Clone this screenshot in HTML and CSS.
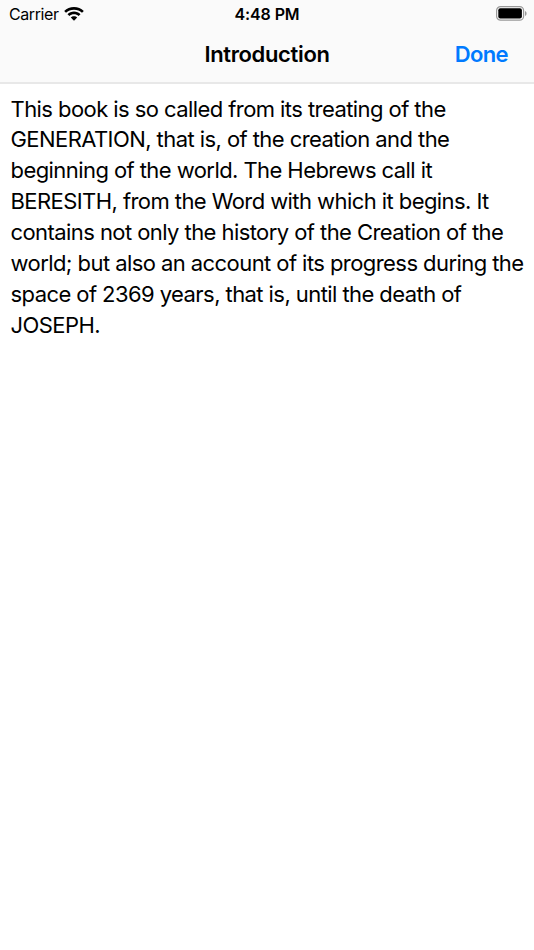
FILE: index.html
```html
<!DOCTYPE html>
<html lang="en">
<head>
    <meta charset="UTF-8">
    <meta name="viewport" content="width=device-width, initial-scale=1.0">
    <title>Introduction</title>
    <link rel="stylesheet" href="styles.css">
</head>
<body>
    <header class="header">
        <div class="status-bar">
            <div class="carrier">
                <span>Carrier</span>
                <svg class="wifi" viewBox="0 0 20 14" width="20" height="14">
                    <path d="M10 0C6.200 0 2.800 1.500 .2 3.900L2 5.800C4.100 3.800 6.900 2.800 10 2.800s5.900 1 8 3l1.800-1.900C17.200 1.500 13.800 0 10 0z"/>
                    <path d="M10 4.600c-2.500 0-4.800 1-6.500 2.600l1.900 1.900C6.600 7.900 8.200 7.300 10 7.300s3.400.6 4.600 1.800l1.900-1.900C14.800 5.600 12.500 4.600 10 4.600z"/>
                    <path d="M10 9.200c-1.300 0-2.400.5-3.200 1.300L10 13.700l3.200-3.200C12.400 9.700 11.300 9.200 10 9.200z"/>
                </svg>
            </div>
            <div class="time">4:48 PM</div>
            <svg class="battery" viewBox="0 0 31 15" width="31" height="15">
                <rect x=".6" y=".6" width="27" height="13.600" rx="4" fill="none" stroke="#999" stroke-width="1.200"/>
                <rect x="2.300" y="2.300" width="23.600" height="10.200" rx="2"/>
                <path d="M29 5c1 .4 1.600 1.300 1.600 2.500S30 9.600 29 10z" fill="#999"/>
            </svg>
        </div>
        <nav class="nav-bar">
            <h1>Introduction</h1>
            <button class="done" type="button">Done</button>
        </nav>
    </header>
    <main class="content">
        <p>
            This book is so called from its treating of the<br>
            GENERATION, that is, of the creation and the<br>
            beginning of the world. The Hebrews call it<br>
            BERESITH, from the Word with which it begins. It<br>
            contains not only the history of the Creation of the<br>
            world; but also an account of its progress during the<br>
            space of 2369 years, that is, until the death of<br>
            JOSEPH.
        </p>
    </main>
</body>
</html>
```
FILE: styles.css
```css
body {
    margin: 0;
    background-color: #fff;
    color: #000;
    font-family: Inter, sans-serif;
}

.header {
    box-sizing: border-box;
    height: 84px;
    background-color: #fafafa;
    border-bottom: 2px solid #e8e8e8;
}

.status-bar {
    display: grid;
    grid-template-columns: 1fr auto 1fr;
    align-items: center;
    height: 27px;
    padding: 0 7px 0 9px;
    font-size: 16px;
}

.carrier {
    display: flex;
    align-items: center;
    gap: 5px;
    letter-spacing: -0.4px;
}

.time {
    margin-right: 2px;
    font-weight: 600;
    letter-spacing: -0.1px;
}

.battery {
    justify-self: end;
}

.nav-bar {
    display: grid;
    grid-template-columns: 1fr auto 1fr;
    align-items: center;
    height: 54px;
    padding: 0 26px;
}

h1 {
    grid-column: 2;
    margin: 0;
    font-size: 22px;
    font-weight: 600;
    letter-spacing: -0.35px;
}

.done {
    justify-self: end;
    padding: 0;
    border: none;
    background: none;
    color: #007aff;
    font-family: inherit;
    font-size: 22px;
    font-weight: 600;
    letter-spacing: -0.6px;
}

.content {
    padding: 9.5px 0 0 10.5px;
}

p {
    margin: 0;
    font-size: 22px;
    line-height: 30.95px;
    letter-spacing: -0.57px;
    white-space: nowrap;
}
```
